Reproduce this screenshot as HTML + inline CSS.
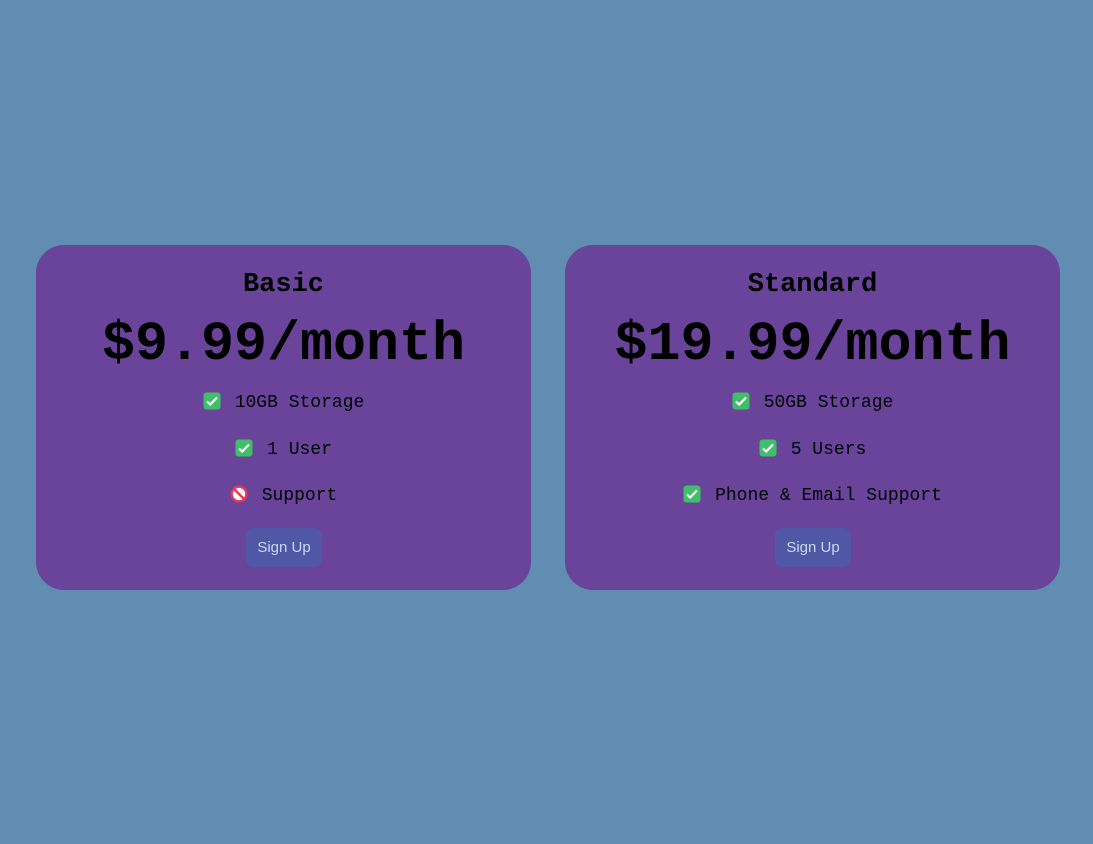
<!DOCTYPE html>
<html><head><style>
body{margin:0;background:#628db2;width:1093px;height:844px;position:relative;font-family:"Liberation Mono",monospace;}
.card{position:absolute;top:245px;width:495px;height:345px;background:#69449a;border-radius:28px;text-align:center;color:#000;}
.t{position:absolute;top:269px;left:0;right:0;font-size:27px;font-weight:bold;line-height:32px;margin:0;}
.p{position:absolute;top:314px;left:0;right:0;font-size:55px;font-weight:bold;line-height:62px;}
.f{position:absolute;left:0;right:0;font-size:18px;line-height:24px;}
.f svg{vertical-align:-3px;margin-right:14px}
.b{position:absolute;top:528px;width:76px;height:39px;background:#5058a6;border-radius:8px;color:#c8d8ef;font-family:"Liberation Sans",sans-serif;font-size:15px;line-height:40px;text-align:center;}
</style></head><body>
<svg width="0" height="0" style="position:absolute"><defs>
<symbol id="ck" viewBox="0 0 18 18"><rect x="0.5" y="0.5" width="17" height="17" rx="3" fill="#3fc068"/><path d="M4 9.5l3.2 3L14 5.5" stroke="#fff" stroke-width="2.2" fill="none"/></symbol>
<symbol id="no" viewBox="0 0 18 18"><circle cx="9" cy="9" r="7.3" fill="#fff" stroke="#e8385a" stroke-width="2.4"/><path d="M4 4l10 10" stroke="#e8385a" stroke-width="2.4"/></symbol>
</defs></svg>
<div class="card" style="left:36px"></div>
<div class="card" style="left:565px"></div>

<div style="position:absolute;left:36px;width:495px;top:0;height:844px;text-align:center">
<div class="t">Basic</div>
<div class="p">$9.99/month</div>
<div class="f" style="top:391px"><svg width="18" height="18"><use href="#ck"/></svg>10GB Storage</div>
<div class="f" style="top:438px"><svg width="18" height="18"><use href="#ck"/></svg>1 User</div>
<div class="f" style="top:484px"><svg width="18" height="18"><use href="#no"/></svg>Support</div>
<div class="b" style="left:210px">Sign Up</div>
</div>

<div style="position:absolute;left:565px;width:495px;top:0;height:844px;text-align:center">
<div class="t">Standard</div>
<div class="p">$19.99/month</div>
<div class="f" style="top:391px"><svg width="18" height="18"><use href="#ck"/></svg>50GB Storage</div>
<div class="f" style="top:438px"><svg width="18" height="18"><use href="#ck"/></svg>5 Users</div>
<div class="f" style="top:484px"><svg width="18" height="18"><use href="#ck"/></svg>Phone &amp; Email Support</div>
<div class="b" style="left:210px">Sign Up</div>
</div>
</body></html>
